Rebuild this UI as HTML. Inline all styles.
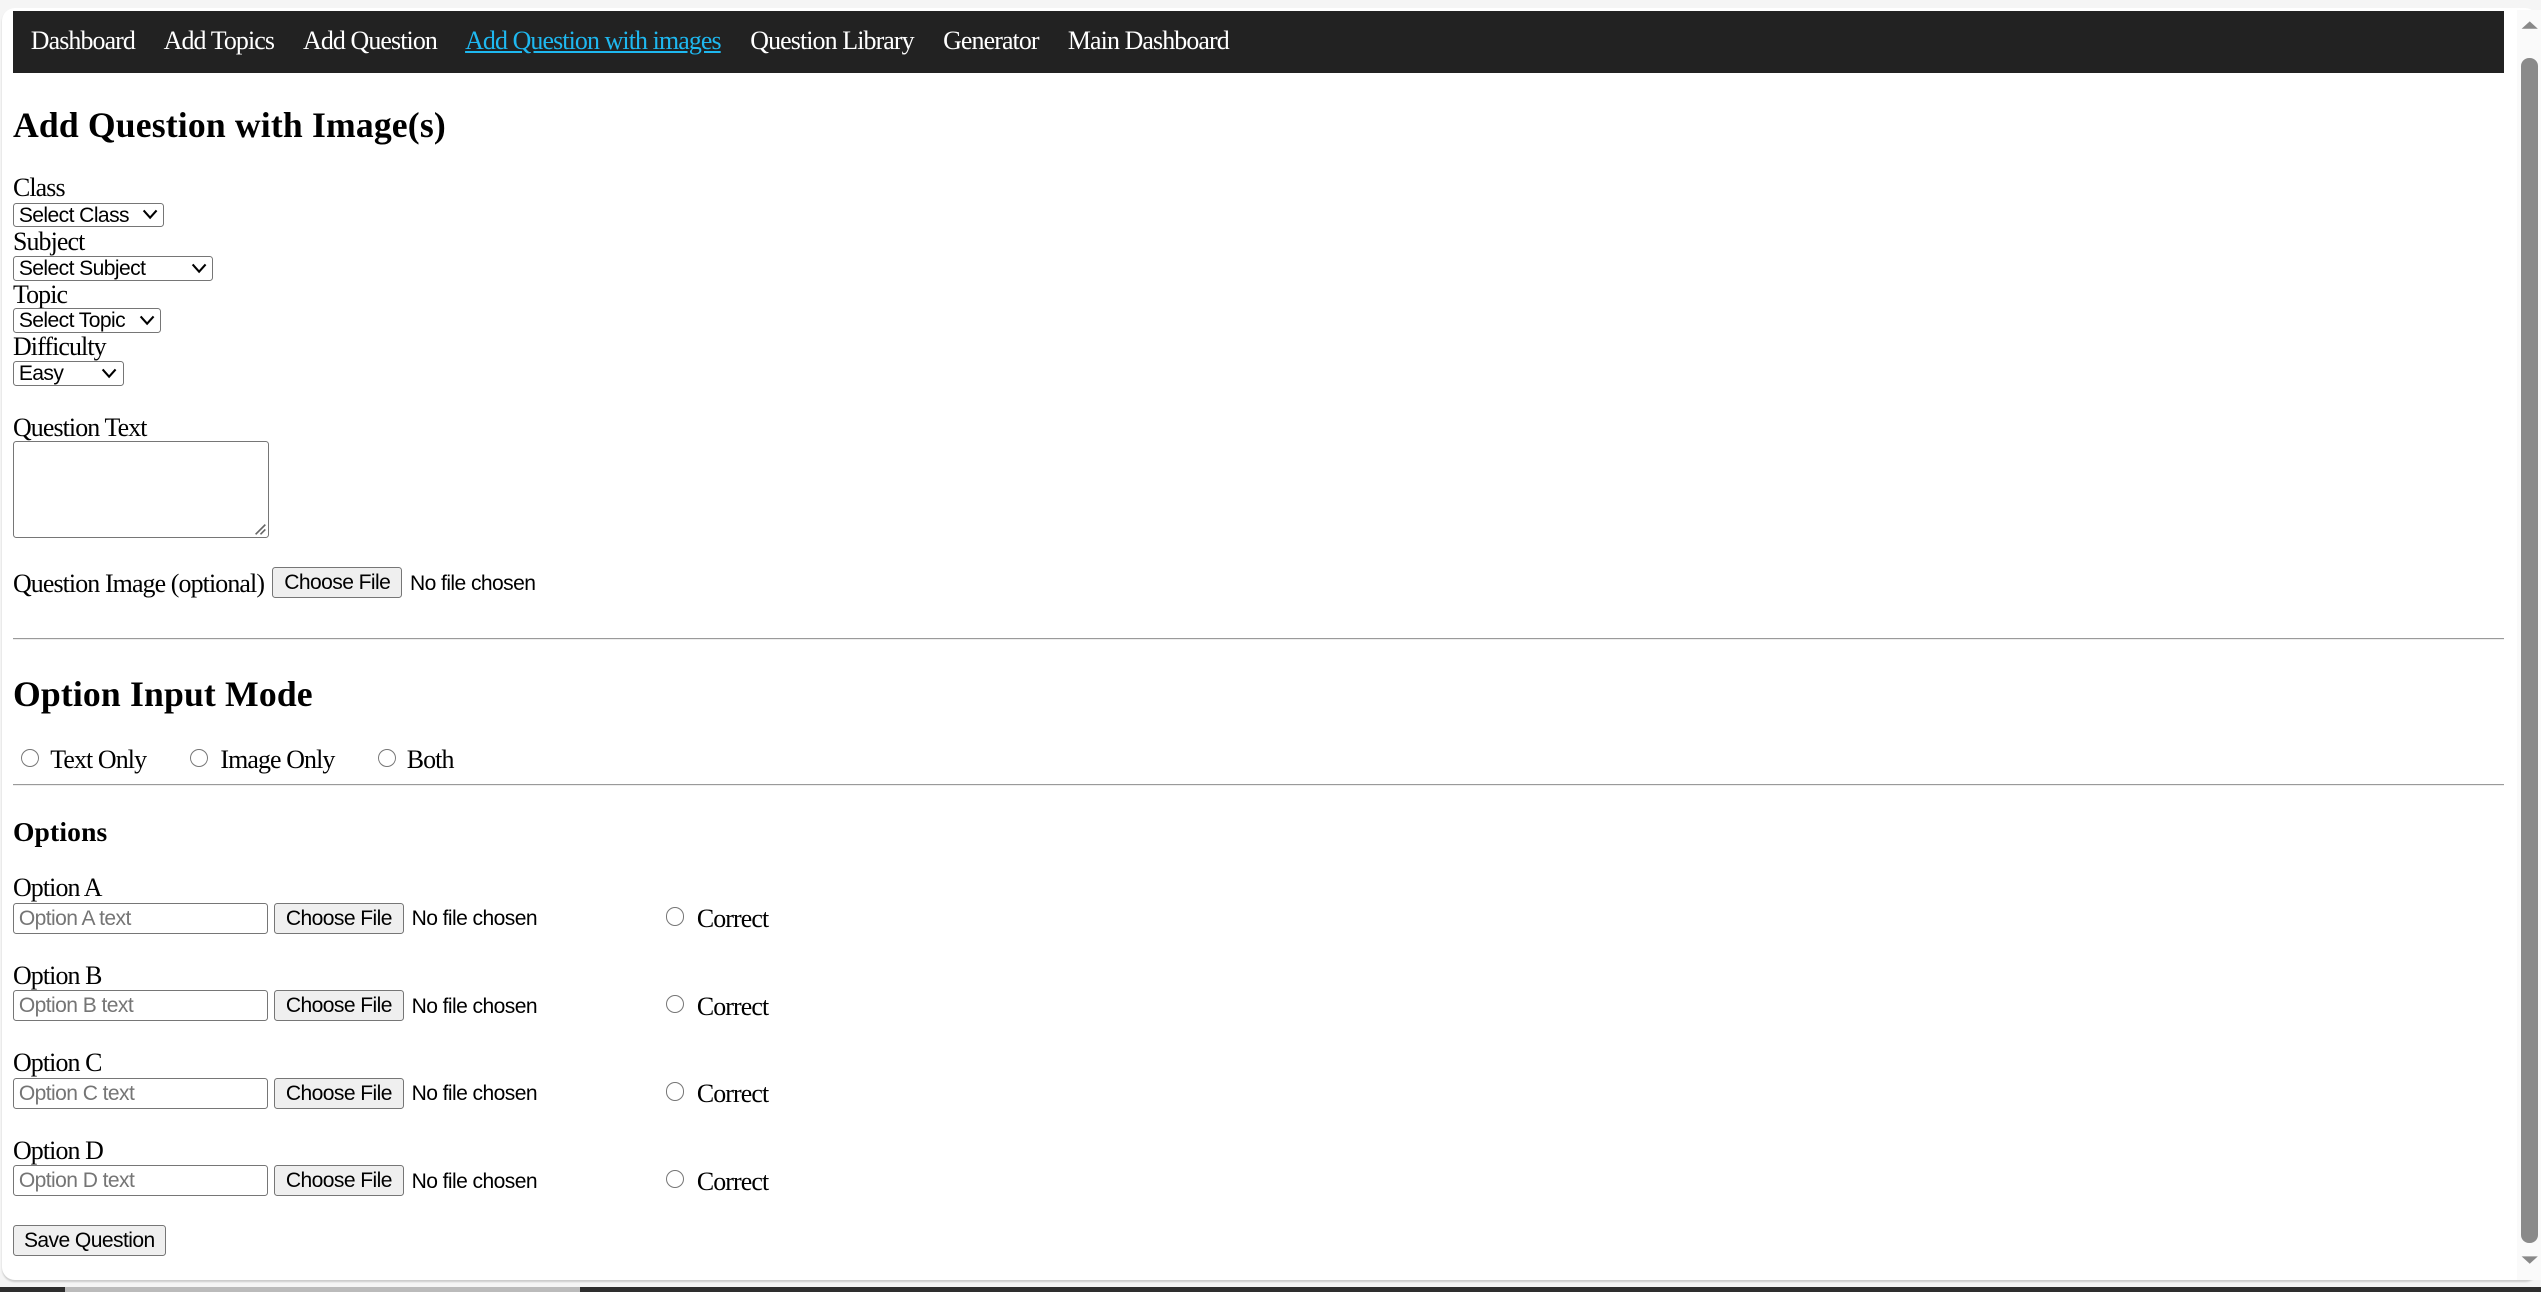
<!DOCTYPE html>
<html><head><meta charset="utf-8">
<style>
html,body{margin:0;padding:0;width:2541px;height:1291px;overflow:hidden;background:#f5f5f5;}
#page{position:absolute;left:0;top:0;width:1568px;height:797px;zoom:1.6205;font-family:"Liberation Serif",serif;font-size:16px;color:#000;letter-spacing:-0.55px;}
#win{position:absolute;left:1px;top:5px;width:1565px;height:785px;background:#fff;border-radius:8px;box-shadow:0 1px 1px #ccc;}
.a{position:absolute;white-space:nowrap;line-height:18px;}
#nav{position:absolute;left:8px;top:7px;width:1537px;height:38px;background:#222;}
#nav span{position:absolute;top:9px;color:#fff;line-height:18px;}
.sel{position:absolute;height:14px;border:1px solid #767676;border-radius:2px;background:#fff;font-family:"Liberation Sans",sans-serif;font-size:13px;line-height:15px;padding-left:3px;box-sizing:content-box;letter-spacing:-0.35px;}
.sel svg{position:absolute;right:3px;top:3px;}
.btn{position:absolute;height:18px;border:1px solid #767676;border-radius:2px;background:#efefef;font-family:"Liberation Sans",sans-serif;font-size:13px;line-height:19px;text-align:center;box-sizing:content-box;letter-spacing:-0.35px;}
.inp{position:absolute;height:18px;border:1px solid #767676;border-radius:2px;background:#fff;font-family:"Liberation Sans",sans-serif;font-size:13px;line-height:19px;color:#757575;padding-left:3px;letter-spacing:-0.35px;}
.nf{position:absolute;font-family:"Liberation Sans",sans-serif;font-size:13px;line-height:19px;white-space:nowrap;letter-spacing:-0.35px;}
.rad{position:absolute;width:10px;height:10px;border:1px solid #767676;border-radius:50%;background:#fff;}
.hr{position:absolute;left:8px;width:1537px;height:0;border-top:1px solid #9a9a9a;border-bottom:1px solid #eee;}
.h{letter-spacing:0.1px;}
</style></head><body>
<div id="page">
<div id="win"></div>
<div id="nav">
<span style="left:11px">Dashboard</span>
<span style="left:93px">Add Topics</span>
<span style="left:179px">Add Question</span>
<span style="left:279px;color:#1eb8f0;text-decoration:underline">Add Question with images</span>
<span style="left:455px">Question Library</span>
<span style="left:574px">Generator</span>
<span style="left:651px">Main Dashboard</span>
</div>
<div class="a h" style="left:8px;top:64px;font-size:22px;font-weight:bold;line-height:26px">Add Question with Image(s)</div>

<div class="a" style="left:8px;top:107px">Class</div>
<div class="sel" style="left:8px;top:125px;width:89px">Select Class<svg width="10" height="8" viewBox="0 0 10 8"><path d="M1 1.5 L5 6 L9 1.5" fill="none" stroke="#000" stroke-width="1.3"/></svg></div>
<div class="a" style="left:8px;top:140px">Subject</div>
<div class="sel" style="left:8px;top:158px;width:119px">Select Subject<svg width="10" height="8" viewBox="0 0 10 8"><path d="M1 1.5 L5 6 L9 1.5" fill="none" stroke="#000" stroke-width="1.3"/></svg></div>
<div class="a" style="left:8px;top:173px">Topic</div>
<div class="sel" style="left:8px;top:190px;width:87px">Select Topic<svg width="10" height="8" viewBox="0 0 10 8"><path d="M1 1.5 L5 6 L9 1.5" fill="none" stroke="#000" stroke-width="1.3"/></svg></div>
<div class="a" style="left:8px;top:205px">Difficulty</div>
<div class="sel" style="left:8px;top:223px;width:64px">Easy<svg width="10" height="8" viewBox="0 0 10 8"><path d="M1 1.5 L5 6 L9 1.5" fill="none" stroke="#000" stroke-width="1.3"/></svg></div>

<div class="a" style="left:8px;top:255px">Question Text</div>
<div style="position:absolute;left:8px;top:272px;width:157px;height:59px;border:1px solid #767676;border-radius:2px;background:#fff"><svg style="position:absolute;right:1px;bottom:1px" width="8" height="8" viewBox="0 0 8 8"><path d="M7 1 L1 7 M7 4 L4 7" stroke="#666" stroke-width="1"/></svg></div>

<div class="a" style="left:8px;top:351px">Question Image (optional)</div>
<div class="btn" style="left:168px;top:350px;width:79px">Choose File</div>
<div class="nf" style="left:253px;top:351px">No file chosen</div>

<div class="hr" style="top:394px"></div>
<div class="a h" style="left:8px;top:415px;font-size:22px;font-weight:bold;line-height:26px">Option Input Mode</div>
<div class="rad" style="left:13px;top:462px"></div><div class="a" style="left:31px;top:460px">Text Only</div>
<div class="rad" style="left:117px;top:462px"></div><div class="a" style="left:136px;top:460px">Image Only</div>
<div class="rad" style="left:233px;top:462px"></div><div class="a" style="left:251px;top:460px">Both</div>
<div class="hr" style="top:484px"></div>

<div class="a h" style="left:8px;top:504px;font-size:17px;font-weight:bold">Options</div>

<div class="a" style="left:8px;top:539px">Option A</div>
<div class="inp" style="left:8px;top:557px;width:153px">Option A text</div>
<div class="btn" style="left:169px;top:557px;width:79px">Choose File</div>
<div class="nf" style="left:254px;top:558px">No file chosen</div>
<div class="rad" style="left:411px;top:560px"></div><div class="a" style="left:430px;top:558px">Correct</div>

<div class="a" style="left:8px;top:593px">Option B</div>
<div class="inp" style="left:8px;top:611px;width:153px">Option B text</div>
<div class="btn" style="left:169px;top:611px;width:79px">Choose File</div>
<div class="nf" style="left:254px;top:612px">No file chosen</div>
<div class="rad" style="left:411px;top:614px"></div><div class="a" style="left:430px;top:612px">Correct</div>

<div class="a" style="left:8px;top:647px">Option C</div>
<div class="inp" style="left:8px;top:665px;width:153px">Option C text</div>
<div class="btn" style="left:169px;top:665px;width:79px">Choose File</div>
<div class="nf" style="left:254px;top:666px">No file chosen</div>
<div class="rad" style="left:411px;top:668px"></div><div class="a" style="left:430px;top:666px">Correct</div>

<div class="a" style="left:8px;top:701px">Option D</div>
<div class="inp" style="left:8px;top:719px;width:153px">Option D text</div>
<div class="btn" style="left:169px;top:719px;width:79px">Choose File</div>
<div class="nf" style="left:254px;top:720px">No file chosen</div>
<div class="rad" style="left:411px;top:722px"></div><div class="a" style="left:430px;top:720px">Correct</div>

<div class="btn" style="left:8px;top:756px;width:93px">Save Question</div>

<div style="position:absolute;left:1553px;top:6px;width:15px;height:784px;background:#fafafa"></div>
<div style="position:absolute;left:1556px;top:36px;width:10px;height:731px;background:#8a8a8a;border-radius:5px"></div>
<svg style="position:absolute;left:1555px;top:12px" width="12" height="8"><path d="M1 6 L6 1.5 L11 6 Z" fill="#888"/></svg>
<svg style="position:absolute;left:1555px;top:774px" width="12" height="8"><path d="M1 1.5 L6 6 L11 1.5 Z" fill="#888"/></svg>
<div style="position:absolute;left:0;top:794px;width:1568px;height:3px;background:#2e2e2e"></div>
<div style="position:absolute;left:40px;top:794px;width:318px;height:3px;background:#bbb"></div>
</div>
</body></html>
